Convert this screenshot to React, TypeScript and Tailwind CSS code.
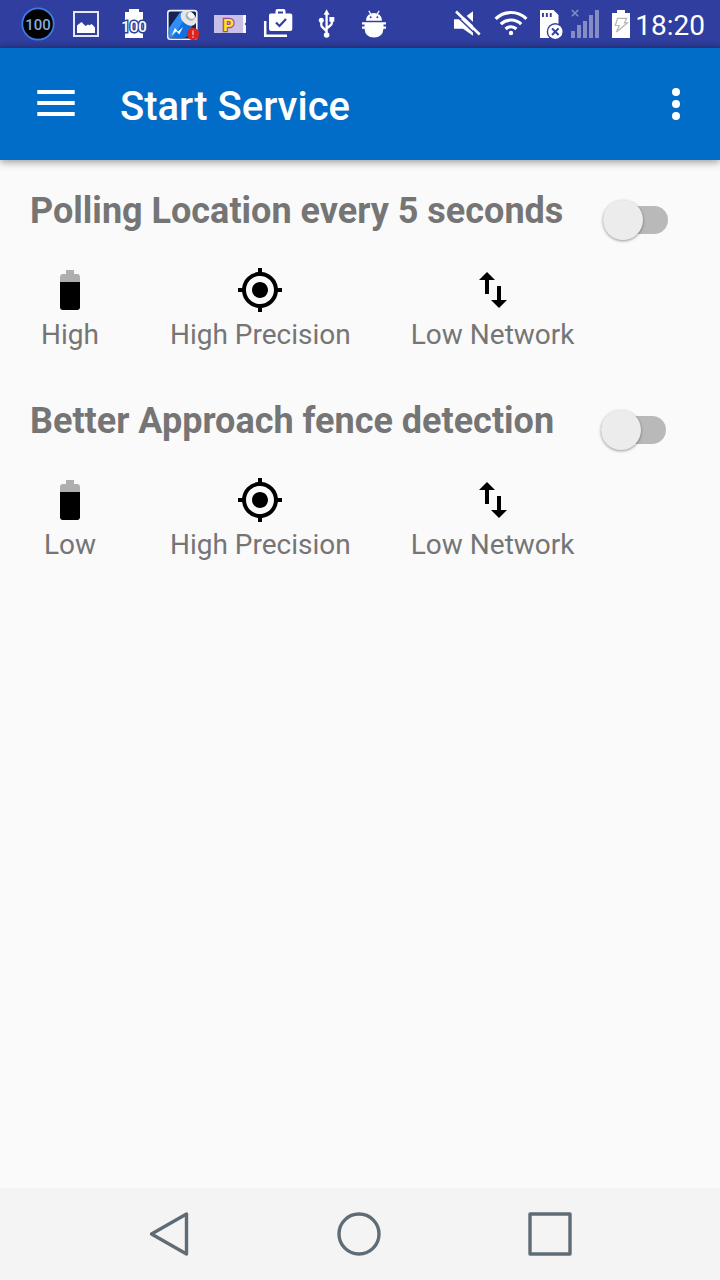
import { useState } from "react";
import type { ReactNode } from "react";

function Slot({ children, label }: { children: ReactNode; label: string }) {
  return (
    <svg className="h-12 w-12 shrink-0" viewBox="0 0 48 48" role="img" aria-label={label}>
      {children}
    </svg>
  );
}

function StatusBar() {
  return (
    <div className="flex h-12 items-center justify-between bg-linear-to-b from-[#303f9f] from-85% to-[#2a378b] pr-[15px] pl-3.5 text-white">
      <div className="flex">
        <Slot label="Battery level">
          <circle cx="24" cy="24" r="15.7" fill="#000" stroke="#3f7be6" strokeWidth="1.8" />
          <text x="24" y="29.700" textAnchor="middle" fontFamily="Roboto, sans-serif" fontSize="15" fontWeight="500" fill="#86acdc">100</text>
        </Slot>
        <Slot label="Screenshot">
          <rect x="12" y="12" width="24" height="24" fill="none" stroke="#e6e7f5" strokeWidth="2" />
          <path d="M15 33v-7.500l4.500-3.500 4 4 2.500-1.500 1.500.8 2.200-1.300 3.300 3.500V33z" fill="#fff" />
        </Slot>
        <Slot label="Battery full">
          <path d="M19 9h10v3h4v26H15V12h4z" fill="#fff" />
          <text x="24" y="31.700" textAnchor="middle" fontFamily="Roboto, sans-serif" fontSize="15" fontWeight="500" fill="#fff" stroke="#303f9f" strokeWidth="3" paintOrder="stroke">100</text>
        </Slot>
        <Slot label="Battery alert">
          <rect x="9.800" y="10.600" width="29" height="28.600" rx="2.500" fill="#16224f" stroke="#f1f3f8" strokeWidth="1.600" />
          <path d="M11.500 27.500 22 12.500Q31 9 37.500 19.500L30 34.500Q28 39 22 38.500L12 38Q9.500 33 11.500 27.500z" fill="#1270e2" />
          <path d="M11.500 27.500 22 12.500 26 20 15 37l-4 1z" fill="#2f8ff4" />
          <ellipse cx="30.500" cy="18" rx="9" ry="6.500" transform="rotate(42 30.500 18)" fill="#e4e6e8" />
          <ellipse cx="32" cy="16.500" rx="5" ry="3.800" transform="rotate(42 32 16.500)" fill="#aeb3b8" />
          <ellipse cx="33" cy="15.500" rx="3.600" ry="2.800" transform="rotate(42 33 15.500)" fill="#f7f7f7" />
          <path d="M13.500 35.500l3.500-7.500 3 3.500 5-4.500-3.700 7.500-3-3.300z" fill="#fff" />
          <circle cx="35" cy="34" r="6.200" fill="#d9241f" />
          <path d="M34.400 30.500h1.200v4.500h-1.200zM34.400 36.300h1.200v1.400h-1.200z" fill="#ffc9c6" />
        </Slot>
        <Slot label="Parking ticket">
          <path d="M8 15h32v18H8z" fill="#c8c0e6" />
          <path d="M38.500 15v18" stroke="#fff" strokeWidth="2.600" />
          <path d="M40 22.500L38.500 24l1.500 1.500z" fill="#303f9f" />
          <text x="22.500" y="30.500" textAnchor="middle" fontFamily="Roboto, sans-serif" fontSize="17" fontWeight="700" fill="#ffe619" stroke="#a8459b" strokeWidth="2.600" paintOrder="stroke">P</text>
        </Slot>
        <Slot label="Store updates">
          <path d="M11.200 21v14.800H33" fill="none" stroke="#fff" strokeWidth="2.500" />
          <path d="M16.500 13.500h5V11a2 2 0 0 1 2-2h6a2 2 0 0 1 2 2v2.500h5a1.800 1.800 0 0 1 1.800 1.800V29a2 2 0 0 1-2 2H17a2 2 0 0 1-2-2V15.300a1.800 1.800 0 0 1 1.500-1.800zM24 13.500h5V11.500h-5z" fill="#fff" fillRule="evenodd" />
          <path d="M22 22.500l3.500 3.500 6.500-7" fill="none" stroke="#303f9f" strokeWidth="2.200" />
        </Slot>
        <Slot label="USB connected">
          <path d="M24.600 14v20M19.300 20.500V25q0 1.500 1.500 2.500l3.800 4M29.800 20.500v2.800q0 1.200-1.500 2.200l-3.700 3" fill="none" stroke="#fff" strokeWidth="2.300" />
          <path d="M24.600 9.300l3 5.400h-6zM27.400 17h4.900v4.800h-4.900z" fill="#fff" />
          <circle cx="19.300" cy="20.300" r="2.500" fill="#fff" />
          <circle cx="24.600" cy="35" r="2.800" fill="#fff" />
        </Slot>
        <Slot label="USB debugging">
          <path d="M16 20.700c0-3.300 1.700-5.600 4-6.800l-1.700-2.700 1-.7 1.900 2.900a10 10 0 0 1 5.600 0l1.900-2.900 1 .7-1.700 2.700c2.300 1.200 4 3.500 4 6.800z" fill="#fff" />
          <circle cx="20.600" cy="17.300" r="1" fill="#303f9f" />
          <circle cx="27.400" cy="17.300" r="1" fill="#303f9f" />
          <path d="M12 22.300h24v2.200h-2.500v2H36v2.200h-2.500q-.7 8.700-9.500 8.900-8.800-.2-9.500-8.900H12v-2.200h2.500v-2H12z" fill="#fff" />
        </Slot>
      </div>
      <div className="flex items-center">
        <svg className="h-12 w-10" viewBox="0 0 40 48" role="img" aria-label="Sound muted">
          <path d="M1 19.300h8l11-8v24.500l-10-7H1z" fill="#fff" />
          <path d="M4.800 9.500l24 22.500" stroke="#303f9f" strokeWidth="2.500" />
          <path d="M1 13.500l24 23" stroke="#303f9f" strokeWidth="1.500" />
          <path d="M3 11.500l23.700 23" stroke="#fff" strokeWidth="2.600" />
        </svg>
        <svg className="h-12 w-[46px]" viewBox="0 0 46 48" role="img" aria-label="Wi-Fi">
          <g fill="none" stroke="#fff" strokeWidth="3.200">
            <path d="M2.600 18.800a22 22 0 0 1 30.800 0" />
            <path d="M7.800 24.200a14.500 14.500 0 0 1 20.400 0" />
            <path d="M12.600 29a7.600 7.600 0 0 1 10.800 0" />
          </g>
          <circle cx="18" cy="33" r="2.200" fill="#fff" />
        </svg>
        <svg className="h-12 w-[31px]" viewBox="0 0 31 48" role="img" aria-label="Memory card removed">
          <path d="M1 10h13.500l5 5v23H1z" fill="#fff" />
          <path d="M3 13h1.900v4H3zM6.900 13h1.900v4H6.900zM10.800 13h1.900v4h-1.900z" fill="#303f9f" />
          <circle cx="16.300" cy="31.700" r="8.600" fill="#303f9f" />
          <circle cx="16.300" cy="31.700" r="7.200" fill="#fff" />
          <path d="M13 28.400l6.600 6.600M19.600 28.400L13 35" stroke="#303f9f" strokeWidth="2" />
        </svg>
        <svg className="h-12 w-[41px]" viewBox="0 0 41 48" role="img" aria-label="No mobile signal">
          <path d="M1 31h4v7H1zM7 25h4v13H7zM13 21h4v17h-4zM19 15h4v23h-4zM25 10h4v28h-4z" fill="#858dc6" />
          <path d="M1.800 10l6.400 6.200M8.200 10l-6.400 6.200" stroke="#858dc6" strokeWidth="1.600" />
        </svg>
        <svg className="h-12 w-6" viewBox="0 0 24 48" role="img" aria-label="Battery charging">
          <path d="M6 10h8v3h5v25H1V13h5z" fill="#fff" />
          <path d="M6.500 18.300h9.300l-2.300 4.500h3L5.500 32l2.700-6.500H4.300z" fill="none" stroke="#b5b5b5" strokeWidth="1.200" />
        </svg>
        <span className="pt-1 text-[28px] leading-8">18:20</span>
      </div>
    </div>
  );
}

function AppBar() {
  return (
    <header className="flex h-28 items-center bg-[#026dc9] pr-5 pl-8 text-white shadow-[0_2px_8px_rgba(0,0,0,0.4)]">
      <button type="button" aria-label="Open menu" className="h-12 w-12">
        <svg className="h-12 w-12" viewBox="0 0 48 48" fill="currentColor">
          <path d="M5.300 10h37.400v4H5.300zM5.300 21h37.400v4H5.300zM5.300 32h37.400v4H5.300z" />
        </svg>
      </button>
      <h1 className="ml-10 flex-1 pt-1.5 text-[40px] leading-12 font-medium">Start Service</h1>
      <button type="button" aria-label="More options" className="h-12 w-12">
        <svg className="h-12 w-12" viewBox="0 0 48 48" fill="currentColor">
          <circle cx="24" cy="12" r="4" />
          <circle cx="24" cy="24" r="4" />
          <circle cx="24" cy="36" r="4" />
        </svg>
      </button>
    </header>
  );
}

function BatteryIcon() {
  return (
    <svg className="h-12 w-12" viewBox="0 0 24 24" aria-hidden="true">
      <path d="M15.670 4H14V2h-4v2H8.330C7.600 4 7 4.600 7 5.330V8h10V5.330C17 4.600 16.400 4 15.670 4z" fill="#aeaeae" />
      <path d="M7 8v12.670C7 21.400 7.600 22 8.330 22h7.330c.74 0 1.340-.6 1.340-1.330V8H7z" />
    </svg>
  );
}

function PrecisionIcon() {
  return (
    <svg className="h-12 w-12" viewBox="0 0 24 24" aria-hidden="true">
      <path d="M12 8c-2.210 0-4 1.790-4 4s1.790 4 4 4 4-1.790 4-4-1.790-4-4-4zm8.940 3A8.994 8.994 0 0 0 13 3.060V1h-2v2.060A8.994 8.994 0 0 0 3.060 11H1v2h2.060A8.994 8.994 0 0 0 11 20.940V23h2v-2.060A8.994 8.994 0 0 0 20.940 13H23v-2h-2.060zM12 19c-3.870 0-7-3.130-7-7s3.130-7 7-7 7 3.130 7 7-3.130 7-7 7z" />
    </svg>
  );
}

function NetworkIcon() {
  return (
    <svg className="h-12 w-12" viewBox="0 0 24 24" aria-hidden="true">
      <path d="M9 3L5 6.990h3V14h2V6.990h3L9 3zm7 14.010V10h-2v7.010h-3L15 21l4-3.990h-3z" />
    </svg>
  );
}

function Feature({ icon, label }: { icon: ReactNode; label: string }) {
  return (
    <li className="flex min-w-20 flex-col items-center gap-1 text-black">
      {icon}
      <span className="text-[28px] leading-[34px] whitespace-nowrap text-[#757575]">{label}</span>
    </li>
  );
}

type ServiceProps = { id: string; title: string; battery: string; inset: string };

function Service({ id, title, battery, inset }: ServiceProps) {
  const [on, setOn] = useState(false);
  return (
    <section>
      <div className={`flex h-[60px] items-center justify-between ${inset}`}>
        <h2 className="self-start text-4xl leading-[42px] font-bold">
          <label htmlFor={id}>{title}</label>
        </h2>
        <input
          id={id}
          type="checkbox"
          role="switch"
          checked={on}
          onChange={(e) => setOn(e.target.checked)}
          className="relative h-7 w-[65px] shrink-0 appearance-none rounded-full bg-[#b9b9b9] before:absolute before:-top-1.5 before:left-0 before:size-10 before:rounded-full before:bg-[#ececec] before:shadow-[0_1px_3px_rgba(0,0,0,0.4)] checked:bg-[#80b6e4] checked:before:left-[25px] checked:before:bg-[#026dc9]"
        />
      </div>
      <ul className="mt-4 flex gap-[60px]">
        <Feature icon={<BatteryIcon />} label={battery} />
        <Feature icon={<PrecisionIcon />} label="High Precision" />
        <Feature icon={<NetworkIcon />} label="Low Network" />
      </ul>
    </section>
  );
}

function NavBar() {
  return (
    <nav className="grid h-[92px] grid-cols-3 place-items-center bg-[#f4f4f4] px-[74px] text-[#5f6c75]">
      <button type="button" aria-label="Back">
        <svg className="size-12" viewBox="0 0 48 48" fill="none" stroke="currentColor" strokeWidth="3.400" strokeLinejoin="round">
          <path d="M41.500 4v40L6.500 24z" />
        </svg>
      </button>
      <button type="button" aria-label="Home">
        <svg className="size-12" viewBox="0 0 48 48" fill="none" stroke="currentColor" strokeWidth="3.400">
          <circle cx="23" cy="24" r="20" />
        </svg>
      </button>
      <button type="button" aria-label="Recent apps">
        <svg className="size-12" viewBox="0 0 48 48" fill="none" stroke="currentColor" strokeWidth="3.400" strokeLinejoin="round">
          <path d="M3 4h40v40H3z" />
        </svg>
      </button>
    </nav>
  );
}

export default function App() {
  return (
    <div className="flex min-h-screen flex-col bg-[#fafafa] font-[Roboto,sans-serif]">
      <StatusBar />
      <AppBar />
      <main className="flex flex-1 flex-col gap-12 px-[30px] pt-[30px] text-[#757575]">
        <Service id="polling" title="Polling Location every 5 seconds" battery="High" inset="pr-[22px]" />
        <Service id="fence" title="Better Approach fence detection" battery="Low" inset="pr-6" />
      </main>
      <NavBar />
    </div>
  );
}
